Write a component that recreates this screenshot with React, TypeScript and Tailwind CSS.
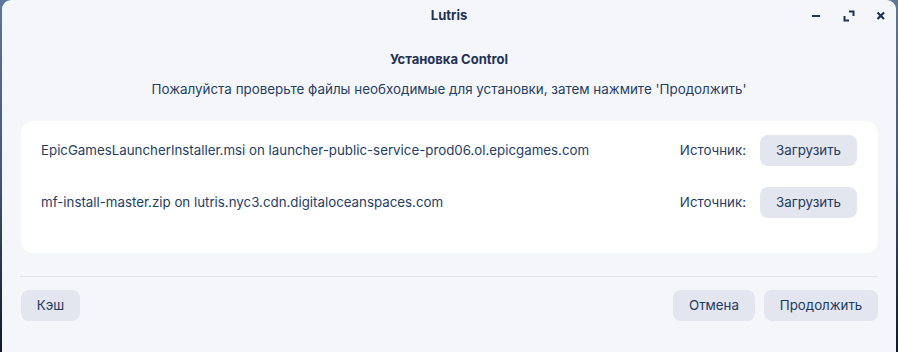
import React from 'react';

const files = [
    'EpicGamesLauncherInstaller.msi on launcher-public-service-prod06.ol.epicgames.com',
    'mf-install-master.zip on lutris.nyc3.cdn.digitaloceanspaces.com',
];

const btn = 'h-[31px] rounded-[8px] bg-[#e3e6ee] text-[13.3px] text-[#213a5e] flex items-center justify-center';

const App: React.FC = () => {
    return (
        <div
            className="w-[898px] h-[352px] flex bg-gradient-to-b from-[#5d7797] via-[#3f5877] to-[#0e1a2b] overflow-hidden"
            style={{ fontFamily: 'Inter, "Noto Sans", sans-serif' }}
        >
            <div className="ml-[2px] w-[894px] h-full bg-[#f5f6fa] rounded-t-[9px] flex flex-col text-[#253e62]">
                {/* header bar */}
                <div className="relative h-[31px] flex items-center justify-center">
                    <span className="text-[13px] font-bold text-[#1e3354]">Lutris</span>
                    <div className="absolute right-0 top-0 h-full flex items-center">
                        <svg width="10" height="10" viewBox="0 0 10 10" className="absolute left-[-84px] top-[11px]">
                            <rect x="0" y="4" width="8" height="2" fill="#1e3354" />
                        </svg>
                        <svg width="12" height="12" viewBox="0 0 12 12" className="absolute left-[-53px] top-[10px]">
                            <path d="M6 1.5h4.5V6" stroke="#1e3354" strokeWidth="2" fill="none" />
                            <path d="M1.5 6v4.5H6" stroke="#1e3354" strokeWidth="2" fill="none" />
                        </svg>
                        <svg width="10" height="10" viewBox="0 0 10 10" className="absolute left-[-20px] top-[11px]">
                            <path d="M1.5 1.5l6.5 6.5M8 1.5l-6.5 6.5" stroke="#1e3354" strokeWidth="2.2" fill="none" />
                        </svg>
                    </div>
                </div>

                <div className="mt-[19px] h-[20px] flex items-center justify-center text-[13px] font-bold text-[#1e3354]">
                    Установка Control
                </div>
                <div className="mt-[9px] h-[20px] flex items-center justify-center text-[13.4px]">
                    Пожалуйста проверьте файлы необходимые для установки, затем нажмите 'Продолжить'
                </div>

                {/* files card */}
                <div className="mt-[22px] ml-[19px] w-[857px] h-[132px] bg-white rounded-[12px] pl-[20px] pr-[21px] pt-[14px] flex flex-col gap-[21px]">
                    {files.map((f) => (
                        <div key={f} className="flex items-center h-[31px] text-[13.3px]">
                            <span className="flex-1">{f}</span>
                            <span className="mr-[14px]">Источник:</span>
                            <div className={`${btn} w-[97px]`}>Загрузить</div>
                        </div>
                    ))}
                </div>

                <div className="mt-[23px] ml-[18px] w-[858px] h-px bg-[#e0e3ea]" />

                <div className="mt-[13px] ml-[19px] w-[857px] flex items-center">
                    <div className={`${btn} w-[59px]`}>Кэш</div>
                    <div className="flex-1" />
                    <div className={`${btn} w-[82px]`}>Отмена</div>
                    <div className={`${btn} w-[114px] ml-[9px]`}>Продолжить</div>
                </div>
            </div>
        </div>
    );
};

export default App;
